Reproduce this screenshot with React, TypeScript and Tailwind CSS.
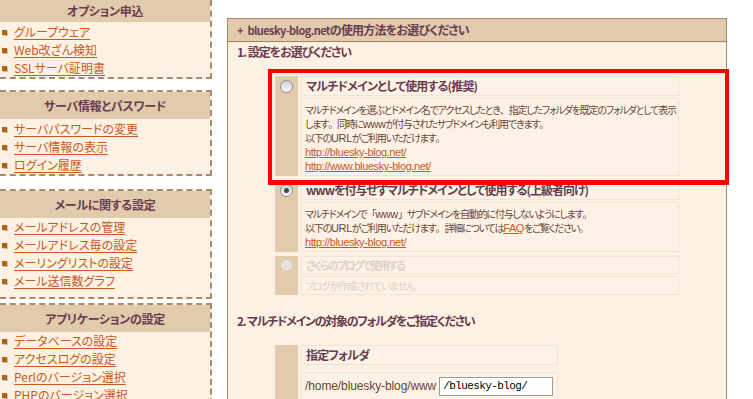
import React from "react";

const FONT = "font-['Noto_Sans_CJK_JP','Noto_Sans',sans-serif] [font-feature-settings:'palt']";

type BoxProps = {
  title: string;
  items: string[];
  boxClass: string;
  headClass: string;
  listClass: string;
};

function SideBox({ title, items, boxClass, headClass, listClass }: BoxProps) {
  return (
    <div className={"w-[212px] border-r-2 border-dashed border-[#a88a6c] bg-[#fdf1e3] " + boxClass}>
      <div className={"bg-[#e2cbad] flex items-center justify-center text-[12px] font-bold text-[#6a3c4f] tracking-[-0.3px] " + headClass}>
        {title}
      </div>
      <ul className={listClass}>
        {items.map((t) => (
          <li key={t} className="h-[18px] flex items-center">
            <span className="ml-[2px] w-[5px] h-[5px] bg-[#b3630e] shadow-[1px_1px_0_#cdbba8]" />
            <a className="ml-[7px] text-[12px] leading-[18px] text-[#c95a1e] underline underline-offset-[2px] whitespace-nowrap">{t}</a>
          </li>
        ))}
      </ul>
    </div>
  );
}

function Radio({ state }: { state: "off" | "on" | "disabled" }) {
  if (state === "disabled") {
    return <div className="w-[13px] h-[13px] rounded-full border border-[#d6cdc1] bg-[#e9e1d6]" />;
  }
  return (
    <div className="w-[13px] h-[13px] rounded-full border border-[#8c8c8c] bg-linear-to-b from-[#d4d4d4] to-[#f8f8f8] flex items-center justify-center">
      {state === "on" && <div className="w-[5px] h-[5px] rounded-full bg-[#474747]" />}
    </div>
  );
}

const CELL = "border border-[#f1e3d5] bg-[#fdf2e5]";
const DESC = "text-[10px] leading-[14px] text-[#6b4638] tracking-[-1.2px] whitespace-nowrap";
const LAT = "font-['Liberation_Sans',sans-serif] text-[11px] tracking-[-0.4px]";
const LINK = "font-['Liberation_Sans',sans-serif] text-[11px] tracking-[-0.4px] text-[#c95a1e] underline";
const FW = "[font-feature-settings:normal]";

export default function App() {
  return (
    <div className={"relative w-[753px] h-[399px] overflow-hidden bg-white flex items-start " + FONT}>
      {/* Sidebar */}
      <div className="w-[212px] flex flex-col">
        <SideBox
          title="オプション申込"
          items={["グループウェア", "Web改ざん検知", "SSLサーバ証明書"]}
          boxClass="border-b-2"
          headClass="h-[22px]"
          listClass="pt-[1px]"
        />
        <SideBox
          title="サーバ情報とパスワード"
          items={["サーバパスワードの変更", "サーバ情報の表示", "ログイン履歴"]}
          boxClass="mt-[11px] border-t-2 border-b-2"
          headClass="h-[27px]"
          listClass="pt-[1px]"
        />
        <SideBox
          title="メールに関する設定"
          items={["メールアドレスの管理", "メールアドレス毎の設定", "メーリングリストの設定", "メール送信数グラフ"]}
          boxClass="mt-[13px] border-t-2 border-b-2"
          headClass="h-[27px]"
          listClass="pt-[0px] pb-[7px]"
        />
        <SideBox
          title="アプリケーションの設定"
          items={["データベースの設定", "アクセスログの設定", "Perlのバージョン選択", "PHPのバージョン選択"]}
          boxClass="mt-[4px] border-t-2"
          headClass="h-[27px]"
          listClass="pt-0"
        />
      </div>

      {/* Main panel */}
      <div className="mt-[18px] ml-[15px] w-[500px] h-[381px] border border-b-0 border-[#a88668] bg-[#fdf1e3]">
        <div className="h-[23px] bg-[#e2cbad] border-b border-[#a88668] pl-[9px] flex items-center font-bold text-[#6a3c4f] whitespace-nowrap">
          <span className="text-[11px] mr-[4px]">+</span>
          <span className="text-[11px] tracking-[-0.6px]">bluesky-blog.net</span>
          <span className="text-[12px] tracking-[-0.8px]">の使用方法をお選びください</span>
        </div>
        <div className="h-[1px] bg-[#f7e9da]" />
        <div className="pl-[9px] h-[18px] flex items-center text-[12px] font-bold text-[#6a3c4f] tracking-[-1px] whitespace-nowrap">
          1. 設定をお選びください
        </div>

        <div className="pl-[47px] mt-[15px] flex flex-col">
          {/* Option 1 */}
          <div className="grid grid-cols-[23px_378px] gap-x-[3px] gap-y-[2px]">
            <div className="row-span-2 bg-[#e2cbad] flex justify-center pt-[4px]">
              <Radio state="off" />
            </div>
            <div className={CELL + " h-[20px] pl-[4px] flex items-center text-[12px] font-bold text-[#6a3c4f] tracking-[-0.85px] whitespace-nowrap"}>
              マルチドメインとして使用する(推奨)
            </div>
            <div className={CELL + " h-[78px] pl-[3px] pt-[4px] " + DESC}>
              <div>マルチドメインを選ぶとドメイン名でアクセスしたとき<span className={FW}>、</span>指定したフォルダを既定のフォルダとして表示</div>
              <div>します<span className={FW}>。</span>同時に<span className={LAT}>www</span>が付与されたサブドメインも利用できます<span className={FW}>。</span></div>
              <div>以下の<span className={LAT}>URL</span>がご利用いただけます<span className={FW}>。</span></div>
              <div><a className={LINK}>http://bluesky-blog.net/</a></div>
              <div><a className={LINK}>http://www.bluesky-blog.net/</a></div>
            </div>
          </div>

          {/* Option 2 */}
          <div className="mt-[4px] grid grid-cols-[23px_378px] gap-x-[3px] gap-y-[2px]">
            <div className="row-span-2 bg-[#e2cbad] flex justify-center pt-[4px]">
              <Radio state="on" />
            </div>
            <div className={CELL + " h-[20px] pl-[4px] flex items-center text-[12px] font-bold text-[#6a3c4f] tracking-[-1px] whitespace-nowrap"}>
              wwwを付与せずマルチドメインとして使用する(上級者向け)
            </div>
            <div className={CELL + " h-[50px] pl-[3px] pt-[4px] " + DESC}>
              <div>マルチドメインで<span className={FW}>「</span><span className={LAT}>www</span><span className={FW}>」</span>サブドメインを自動的に付与しないようにします<span className={FW}>。</span></div>
              <div>
                以下の<span className={LAT}>URL</span>がご利用いただけます<span className={FW}>。</span>詳細については<a className={LINK}>FAQ</a>をご覧ください<span className={FW}>。</span>
              </div>
              <div><a className={LINK}>http://bluesky-blog.net/</a></div>
            </div>
          </div>

          {/* Option 3 */}
          <div className="mt-[4px] grid grid-cols-[23px_378px] gap-x-[3px] gap-y-[2px]">
            <div className="row-span-2 bg-[#e2cbad] flex justify-center pt-[3px]">
              <Radio state="disabled" />
            </div>
            <div className={CELL + " h-[18px] pl-[4px] flex items-center text-[11px] font-bold text-[#dcd2c6] tracking-[-2px] whitespace-nowrap"}>
              さくらのブログで使用する
            </div>
            <div className={CELL + " h-[19px] pl-[3px] flex items-center text-[10px] text-[#dcd2c6] tracking-[-1px] whitespace-nowrap"}>
              ブログが作成されていません
            </div>
          </div>
        </div>

        <div className="pl-[9px] mt-[17px] h-[18px] flex items-center text-[12px] font-bold text-[#6a3c4f] tracking-[-1.3px] whitespace-nowrap">
          2. マルチドメインの対象のフォルダをご指定ください
        </div>

        <div className="pl-[47px] mt-[15px]">
          <div className="grid grid-cols-[23px_257px] gap-x-[3px] gap-y-[2px]">
            <div className="row-span-2 bg-[#e2cbad] h-[60px]" />
            <div className={CELL + " h-[20px] pl-[4px] flex items-center text-[12px] font-bold text-[#6a3c4f] tracking-[-0.85px] whitespace-nowrap"}>
              指定フォルダ
            </div>
            <div className={CELL + " h-[28px] pl-[3px] flex items-center whitespace-nowrap"}>
              <span className="font-['Liberation_Sans',sans-serif] text-[12px] text-[#6b4638] tracking-[-0.1px]">/home/bluesky-blog/www</span>
              <div className="ml-[3px] w-[114px] h-[19px] border border-[#9c9c9c] bg-white flex items-center pl-[3px] font-['Liberation_Mono',monospace] text-[11px] tracking-[-0.6px] text-black">
                /bluesky-blog/
              </div>
            </div>
          </div>
        </div>
      </div>

      {/* Red highlight overlay */}
      <div className="absolute left-[268px] top-[69px] w-[461px] h-[116px] border-4 border-b-[5px] border-[#ff0000] pointer-events-none" />
    </div>
  );
}
